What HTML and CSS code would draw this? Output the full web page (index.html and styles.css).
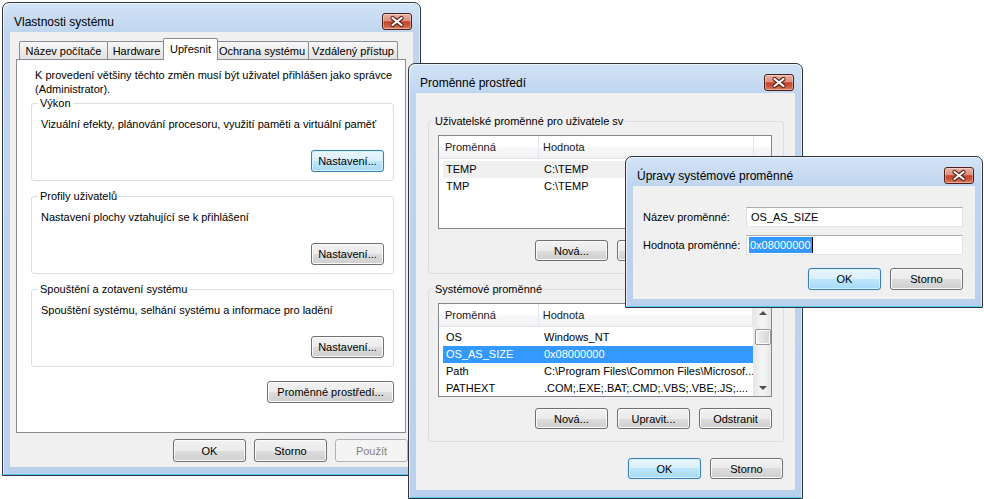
FILE: index.html
```html
<!DOCTYPE html>
<html lang="cs">

<head>
  <meta charset="UTF-8">
  <meta name="viewport" content="width=device-width, initial-scale=1.0">
  <title>Vlastnosti systému</title>
  <link rel="stylesheet" href="styles.css">
</head>

<body>
  <!-- okno 1 -->
  <div class="win sysprops">
    <div class="titlebar">
      <span class="title">Vlastnosti systému</span>
      <span class="close">
        <svg width="28" height="15" viewBox="0 0 28 15">
          <path d="M9.5 4 L18.5 11 M18.5 4 L9.5 11" stroke="#5a2219" stroke-width="4.2" stroke-linecap="round" />
          <path d="M9.5 4 L18.5 11 M18.5 4 L9.5 11" stroke="#fff" stroke-width="2.2" stroke-linecap="round" />
        </svg>
      </span>
    </div>
    <div class="client">
      <ul class="tabs">
        <li class="t-name">Název počítače</li>
        <li class="t-hw">Hardware</li>
        <li class="t-adv active">Upřesnit</li>
        <li class="t-prot">Ochrana systému</li>
        <li class="t-remote">Vzdálený přístup</li>
      </ul>
      <div class="panel">
        <p class="intro">K provedení většiny těchto změn musí být uživatel přihlášen jako správce<br>(Administrator).</p>

        <fieldset class="group">
          <legend>Výkon</legend>
          <p class="desc">Vizuální efekty, plánování procesoru, využití paměti a virtuální paměť</p>
          <div class="row-end"><button class="btn small default">Nastavení...</button></div>
        </fieldset>

        <fieldset class="group">
          <legend>Profily uživatelů</legend>
          <p class="desc">Nastavení plochy vztahující se k přihlášení</p>
          <div class="row-end"><button class="btn small">Nastavení...</button></div>
        </fieldset>

        <fieldset class="group">
          <legend>Spouštění a zotavení systému</legend>
          <p class="desc">Spouštění systému, selhání systému a informace pro ladění</p>
          <div class="row-end"><button class="btn small">Nastavení...</button></div>
        </fieldset>

        <div class="row-end env"><button class="btn small wide">Proměnné prostředí...</button></div>
      </div>
      <div class="dlg-buttons">
        <button class="btn">OK</button>
        <button class="btn">Storno</button>
        <button class="btn" disabled>Použít</button>
      </div>
    </div>
  </div>

  <!-- okno 2 -->
  <div class="win envvars">
    <div class="titlebar">
      <span class="title">Proměnné prostředí</span>
      <span class="close">
        <svg width="28" height="15" viewBox="0 0 28 15">
          <path d="M9.5 4 L18.5 11 M18.5 4 L9.5 11" stroke="#5a2219" stroke-width="4.2" stroke-linecap="round" />
          <path d="M9.5 4 L18.5 11 M18.5 4 L9.5 11" stroke="#fff" stroke-width="2.2" stroke-linecap="round" />
        </svg>
      </span>
    </div>
    <div class="client">
      <fieldset class="group">
        <legend>Uživatelské proměnné pro uživatele sv</legend>
        <div class="list">
          <div class="lview">
            <div class="lhead"><span class="c1">Proměnná</span><span class="c2">Hodnota</span><span class="c3"></span></div>
            <div class="lrow dim"><span class="c1">TEMP</span><span class="c2">C:\TEMP</span></div>
            <div class="lrow"><span class="c1">TMP</span><span class="c2">C:\TEMP</span></div>
          </div>
        </div>
        <div class="list-buttons">
          <button class="btn">Nová...</button>
          <button class="btn">Upravit...</button>
          <button class="btn">Odstranit</button>
        </div>
      </fieldset>

      <fieldset class="group">
        <legend>Systémové proměnné</legend>
        <div class="list">
          <div class="lview">
            <div class="lhead"><span class="c1">Proměnná</span><span class="c2">Hodnota</span></div>
            <div class="lrow"><span class="c1">OS</span><span class="c2">Windows_NT</span></div>
            <div class="lrow sel"><span class="c1">OS_AS_SIZE</span><span class="c2">0x08000000</span></div>
            <div class="lrow"><span class="c1">Path</span><span class="c2">C:\Program Files\Common Files\Microsof...</span></div>
            <div class="lrow"><span class="c1">PATHEXT</span><span class="c2">.COM;.EXE;.BAT;.CMD;.VBS;.VBE;.JS;....</span></div>
          </div>
          <div class="vscroll">
            <span class="arrow up"></span>
            <span class="thumb"></span>
            <span class="track"></span>
            <span class="arrow down"></span>
          </div>
        </div>
        <div class="list-buttons">
          <button class="btn">Nová...</button>
          <button class="btn">Upravit...</button>
          <button class="btn">Odstranit</button>
        </div>
      </fieldset>

      <div class="dlg-buttons">
        <button class="btn default">OK</button>
        <button class="btn">Storno</button>
      </div>
    </div>
  </div>

  <!-- okno 3 -->
  <div class="win editvar">
    <div class="titlebar">
      <span class="title">Úpravy systémové proměnné</span>
      <span class="close">
        <svg width="28" height="15" viewBox="0 0 28 15">
          <path d="M9.5 4 L18.5 11 M18.5 4 L9.5 11" stroke="#5a2219" stroke-width="4.2" stroke-linecap="round" />
          <path d="M9.5 4 L18.5 11 M18.5 4 L9.5 11" stroke="#fff" stroke-width="2.2" stroke-linecap="round" />
        </svg>
      </span>
    </div>
    <div class="client">
      <div class="form">
        <label>Název proměnné:</label>
        <div class="field">OS_AS_SIZE</div>
        <label>Hodnota proměnné:</label>
        <div class="field"><span class="selection">0x08000000</span></div>
      </div>
      <div class="dlg-buttons">
        <button class="btn default">OK</button>
        <button class="btn">Storno</button>
      </div>
    </div>
  </div>
</body>

</html>
```

FILE: styles.css
```css
* {
  margin: 0;
  padding: 0;
  box-sizing: border-box;
}

body {
  position: relative;
  width: 984px;
  height: 499px;
  overflow: hidden;
  background: #fff;
  font-family: "Liberation Sans", Arial, sans-serif;
  font-size: 11px;
  color: #000;
}

li {
  list-style: none;
}

/* okna */
.win {
  position: absolute;
  display: flex;
  flex-direction: column;
  padding: 0 7px 8px;
  border: 1px solid #30353d;
  border-radius: 7px 7px 0 0;
  background: linear-gradient(#d2e3f6, #bfd5ef 30px, #b9d1ed);
  box-shadow: inset 1px 1px 0 rgba(255, 255, 255, .6), inset -1px 0 0 rgba(255, 255, 255, .5), inset 0 -1px 0 #56c8ee;
}

.sysprops {
  left: 2px;
  top: 2px;
  width: 419px;
  height: 474px;
  z-index: 1;
}

.envvars {
  left: 408px;
  top: 63px;
  width: 395px;
  height: 436px;
  z-index: 2;
}

.editvar {
  left: 625px;
  top: 156px;
  width: 358px;
  height: 152px;
  z-index: 3;
}

.titlebar {
  flex: none;
  display: flex;
  justify-content: space-between;
  align-items: flex-start;
  height: 29px;
}

.title {
  padding: 11px 0 0 4px;
  font-size: 12px;
  line-height: 16px;
}

.close {
  display: flex;
  margin: 10px 1px 0 0;
  width: 30px;
  height: 17px;
  border: 1px solid #4e1f18;
  border-radius: 3px;
  background: linear-gradient(#eab3a5, #dc8f7c 45%, #c5432a 52%, #cb5638 75%, #d9806a);
  box-shadow: inset 0 0 0 1px rgba(255, 255, 255, .35);
}

.client {
  flex: 1;
  background: #f0f0f0;
}

/* tlacitka */
.btn {
  display: inline-flex;
  align-items: center;
  justify-content: center;
  width: 73px;
  height: 23px;
  border: 1px solid #707070;
  border-radius: 3px;
  background: linear-gradient(#f2f2f2, #ebebeb 50%, #dddddd 50%, #cfcfcf);
  box-shadow: inset 0 0 0 1px #fbfbfb;
  font-family: inherit;
  font-size: 11px;
  color: #000;
}

.btn.small {
  height: 22px;
}

.btn.wide {
  width: 127px;
}

.btn.default {
  border-color: #3c7fb1;
  background: linear-gradient(#eaf6fd, #d9f0fc 50%, #bee6fd 50%, #a7d9f5);
  box-shadow: inset 0 0 0 1px #d4f0fd, 0 0 1px #6cc3f0;
}

.btn:disabled {
  border-color: #adb2b5;
  background: #f4f4f4;
  box-shadow: none;
  color: #838383;
}

.row-end {
  display: flex;
  justify-content: flex-end;
  margin-top: 19px;
}

.dlg-buttons {
  display: flex;
  justify-content: flex-end;
  gap: 8px;
}

/* skupiny */
.group {
  margin: 0;
  padding: 0 9px 8px;
  min-width: 0;
  border: 1px solid #d5dfe5;
  border-radius: 3px;
}

.group + .group {
  margin-top: 8px;
}

.group legend {
  margin-left: -3px;
  padding: 0 2px;
  line-height: 14px;
}

.desc {
  margin-top: 7px;
  line-height: 14px;
}

/* zalozky */
.sysprops .client {
  display: flex;
  flex-direction: column;
  padding-top: 9px;
}

.tabs {
  display: flex;
  align-items: flex-end;
  height: 18px;
  margin-left: 9px;
  position: relative;
  z-index: 2;
}

.tabs li {
  height: 18px;
  margin-right: -1px;
  padding-top: 2px;
  border: 1px solid #898c95;
  border-bottom: none;
  border-radius: 2px 2px 0 0;
  background: linear-gradient(#f7f7f7, #ececec 50%, #e2e2e2);
  text-align: center;
  line-height: 14px;
  white-space: nowrap;
}

.tabs .t-name { width: 89px; }
.tabs .t-hw { width: 59px; }
.tabs .t-prot { width: 94px; }
.tabs .t-remote { width: 90px; }

.tabs li.active {
  position: relative;
  z-index: 3;
  width: 55px;
  height: 22px;
  margin: 0 -3px -1px -2px;
  padding-top: 3px;
  background: #fff;
}

.panel {
  height: 374px;
  margin: 0 7px 0 6px;
  padding: 8px 11px 0 14px;
  border: 1px solid #898c95;
  background: #fff;
}

.intro {
  margin-left: 4px;
  line-height: 14px;
}

.panel .env {
  margin-top: 14px;
}

.sysprops .dlg-buttons {
  margin-top: 6px;
  padding-right: 5px;
}

/* promenne prostredi */
.envvars .client {
  padding: 21px 11px 0 12px;
}

.envvars .group {
  padding: 0 11px 12px 9px;
}

.envvars .group legend {
  margin-left: -5px;
}

.list {
  display: flex;
  height: 94px;
  margin-top: 7px;
  border: 1px solid #828790;
  background: #fff;
  overflow: hidden;
}

.lview {
  flex: 1;
  min-width: 0;
}

.lhead {
  display: flex;
  height: 23px;
  margin-bottom: 2px;
  border-bottom: 1px solid #e5e5e5;
  background: linear-gradient(#fff, #fff 50%, #f7f8fa 50%, #f1f2f4);
  line-height: 22px;
  color: #1a1a1a;
}

.lhead span {
  border-right: 1px solid #e3e6ea;
}

.lhead .c1 {
  width: 100px;
  padding-left: 6px;
}

.lhead .c2 {
  width: 215px;
  padding-left: 4px;
}

.lhead .c3 {
  flex: 1;
  border-right: none;
}

.lrow {
  display: flex;
  width: 311px;
  height: 17px;
  margin-left: 4px;
  line-height: 17px;
  white-space: nowrap;
}

.lrow .c1 {
  width: 96px;
  padding-left: 3px;
}

.lrow .c2 {
  flex: 1;
  padding-left: 5px;
  overflow: hidden;
}

.lrow.dim {
  background: #f0f0f0;
}

.lrow.sel {
  background: #3399ff;
  color: #fff;
}

.vscroll {
  display: flex;
  flex-direction: column;
  align-items: center;
  width: 18px;
  border-left: 1px solid #e8e8e8;
  background: linear-gradient(90deg, #e6e6e6, #f3f3f3 40%, #f3f3f3 60%, #e6e6e6);
}

.arrow {
  flex: none;
  width: 17px;
  height: 17px;
  display: flex;
  align-items: center;
  justify-content: center;
}

.arrow::after {
  content: "";
  border-left: 4px solid transparent;
  border-right: 4px solid transparent;
}

.arrow.up::after {
  border-bottom: 4px solid #4d4d4d;
}

.arrow.down::after {
  border-top: 4px solid #4d4d4d;
}

.thumb {
  flex: none;
  width: 16px;
  height: 16px;
  margin-top: 8px;
  border: 1px solid #979797;
  border-radius: 2px;
  background: linear-gradient(90deg, #f2f2f2, #e2e2e2 50%, #d4d4d4);
  box-shadow: inset 0 0 0 1px #fbfbfb;
}

.track {
  flex: 1;
}

.list-buttons {
  display: flex;
  justify-content: flex-end;
  gap: 9px;
  margin-top: 11px;
}

.list-buttons .btn,
.envvars .dlg-buttons .btn {
  height: 21px;
}

.envvars .dlg-buttons {
  gap: 9px;
  margin-top: 16px;
  padding-right: 1px;
}

/* uprava promenne */
.editvar .client {
  padding: 21px 12px 0 10px;
}

.form {
  display: grid;
  grid-template-columns: 103px 1fr;
  row-gap: 8px;
  align-items: center;
}

.field {
  height: 20px;
  padding-left: 4px;
  border: 1px solid #abadb3;
  border-color: #abadb3 #e2e3ea #e3e9ef #dbdfe6;
  background: #fff;
  line-height: 18px;
}

.selection {
  display: inline-block;
  margin-left: -2px;
  padding: 0 1px;
  line-height: 16px;
  background: #3399ff;
  color: #fff;
  border-right: 1px solid #000;
}

.editvar .dlg-buttons {
  gap: 9px;
  margin-top: 13px;
}

.editvar .dlg-buttons .btn {
  height: 22px;
}
```
